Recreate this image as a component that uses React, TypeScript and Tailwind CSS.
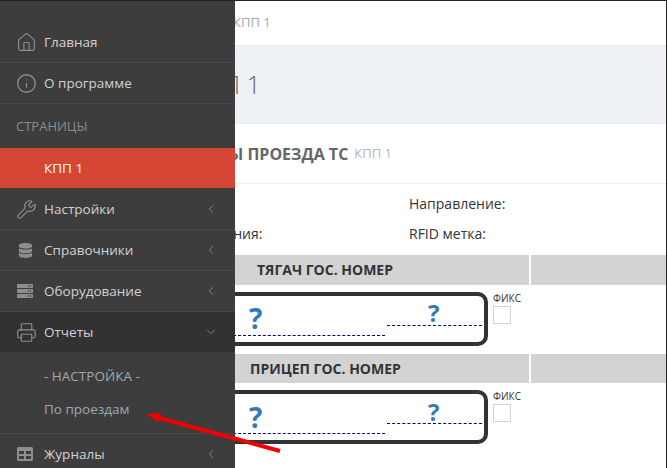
import React from 'react';
import { ChevronDown, ChevronLeft, Home, Info, Printer, Wrench } from 'lucide-react';
import { FaDatabase, FaServer, FaTable } from 'react-icons/fa';

const FONT = "font-['Open_Sans','Noto_Sans',sans-serif]";

const NavRow = ({ icon, label, arrow, open, extra }: { icon: React.ReactNode; label: string; arrow?: boolean; open?: boolean; extra?: string }) => (
  <div className={`flex items-center pl-[16px] pr-[17px] ${open ? 'h-[40px] bg-[#323232]' : 'border-b border-[#484848]'} ${extra || (open ? '' : 'h-[41px]')}`}>
    <span className="flex w-[28px] text-[#8e8e8e]">{icon}</span>
    <span className="flex-1 text-[13.5px] text-[#d2d2d2]">{label}</span>
    {arrow && !open && <ChevronLeft size={14} strokeWidth={1.5} className="text-[#8a8a8a]" />}
    {open && <ChevronDown size={14} strokeWidth={1.5} className="text-[#8a8a8a]" />}
  </div>
);

const Sidebar = () => (
  <aside className="absolute left-0 top-0 h-[468px] w-[235px] overflow-hidden bg-[#3d3d3d] pt-[21px]">
    <NavRow icon={<Home size={21} strokeWidth={1.3} />} label="Главная" />
    <NavRow icon={<Info size={21} strokeWidth={1.5} />} label="О программе" />
    <div className="flex h-[44px] items-center pl-[16px] pt-[1px] text-[13px] text-[#8c8c8c]">СТРАНИЦЫ</div>
    <div className="flex h-[40px] items-center bg-[#d64635] pl-[44px] text-[13.5px] text-white">КПП 1</div>
    <NavRow icon={<Wrench size={21} strokeWidth={1.3} />} label="Настройки" arrow extra="h-[42px] pt-[1px]" />
    <NavRow icon={<FaDatabase size={15} className="ml-[2px]" />} label="Справочники" arrow />
    <NavRow icon={<FaServer size={16} className="ml-[1px]" />} label="Оборудование" arrow />
    <NavRow icon={<Printer size={21} strokeWidth={1.3} />} label="Отчеты" arrow open />
    <div className="flex h-[82px] flex-col border-b border-[#484848] pl-[44px] pt-[14px] text-[13.5px] text-[#a0a8ac]">
      <div className="leading-[20px]">- НАСТРОЙКА -</div>
      <div className="mt-[13px] leading-[20px]">По проездам</div>
    </div>
    <NavRow icon={<FaTable size={16} className="ml-[1px]" />} label="Журналы" arrow />
  </aside>
);

const Plate = () => (
  <div className="flex">
    <div className="ml-[100px] flex h-[54px] w-[388px] items-start rounded-[10px] border-4 border-[#333333]">
      <div className="mt-[39px] h-0 w-[281px] border-b border-dashed border-[#000080]" />
      <div className="ml-[2px] mt-[29px] h-0 w-[95px] border-b border-dashed border-[#000080]" />
    </div>
    <div className="ml-[5px] text-[10px] leading-[12px] text-[#333]">
      <div>ФИКС</div>
      <div className="mt-[2px] h-[18px] w-[18px] border border-[#d3d3d3]" />
    </div>
  </div>
);

const Marks = () => (
  <>
    <span className="absolute left-[249px] top-[301px] text-[28px] font-bold leading-[32px] text-[#337ab7]">?</span>
    <span className="absolute left-[428px] top-[298px] text-[24px] font-bold leading-[28px] text-[#337ab7]">?</span>
    <span className="absolute left-[249px] top-[400px] text-[28px] font-bold leading-[32px] text-[#337ab7]">?</span>
    <span className="absolute left-[428px] top-[397px] text-[24px] font-bold leading-[28px] text-[#337ab7]">?</span>
  </>
);

export default function App() {
  return (
    <div className={`${FONT} relative h-[468px] w-[667px] overflow-hidden border-r border-t border-[#222] bg-white text-[#333]`}>
      <div className="flex h-[45px] items-center border-b border-[#e7ecf1] pl-[233px] text-[13px] text-[#a0a8b0]">КПП 1</div>
      <div className="flex h-[78px] items-center border-b border-[#e7ecf1] bg-[#eef1f5] pl-[190px] text-[25px] font-light text-[#666]">КПП 1</div>
      <div className="h-[60px] border-b border-[#eef1f5]">
        <div className="flex h-full w-[392px] items-center justify-end whitespace-nowrap">
          <span className="text-[16px] font-bold text-[#666]">ПАРАМЕТРЫ ПРОЕЗДА ТС</span>
          <span className="ml-[6px] text-[13px] text-[#b0b8c0]">КПП 1</span>
        </div>
      </div>
      <div className="grid h-[71px] grid-cols-[409px_1fr] pt-[5px] text-sm leading-[30px]">
        <div className="pl-[154px]">
          <div>&nbsp;</div>
          <div>Распознавания:</div>
        </div>
        <div>
          <div>Направление:</div>
          <div>RFID метка:</div>
        </div>
      </div>
      <div className="flex h-[30px] gap-[2px] text-sm font-bold">
        <div className="flex w-[529px] items-center bg-[#d3d3d3] pl-[257px]">ТЯГАЧ ГОС. НОМЕР</div>
        <div className="flex-1 bg-[#d3d3d3]" />
      </div>
      <div className="h-[69px] pt-[7px]">
        <Plate />
      </div>
      <div className="flex h-[29px] gap-[2px] text-sm font-bold">
        <div className="flex w-[529px] items-center bg-[#d3d3d3] pl-[250px]">ПРИЦЕП ГОС. НОМЕР</div>
        <div className="flex-1 bg-[#d3d3d3]" />
      </div>
      <div className="pt-[7px]">
        <Plate />
      </div>
      <Marks />
      <Sidebar />
      <svg className="absolute left-0 top-0" width="667" height="468">
        <line x1="280" y1="450" x2="156" y2="416" stroke="#f00000" strokeWidth="4" />
        <polygon points="146,413 161,412 158,421" fill="#f00000" />
      </svg>
    </div>
  );
}
